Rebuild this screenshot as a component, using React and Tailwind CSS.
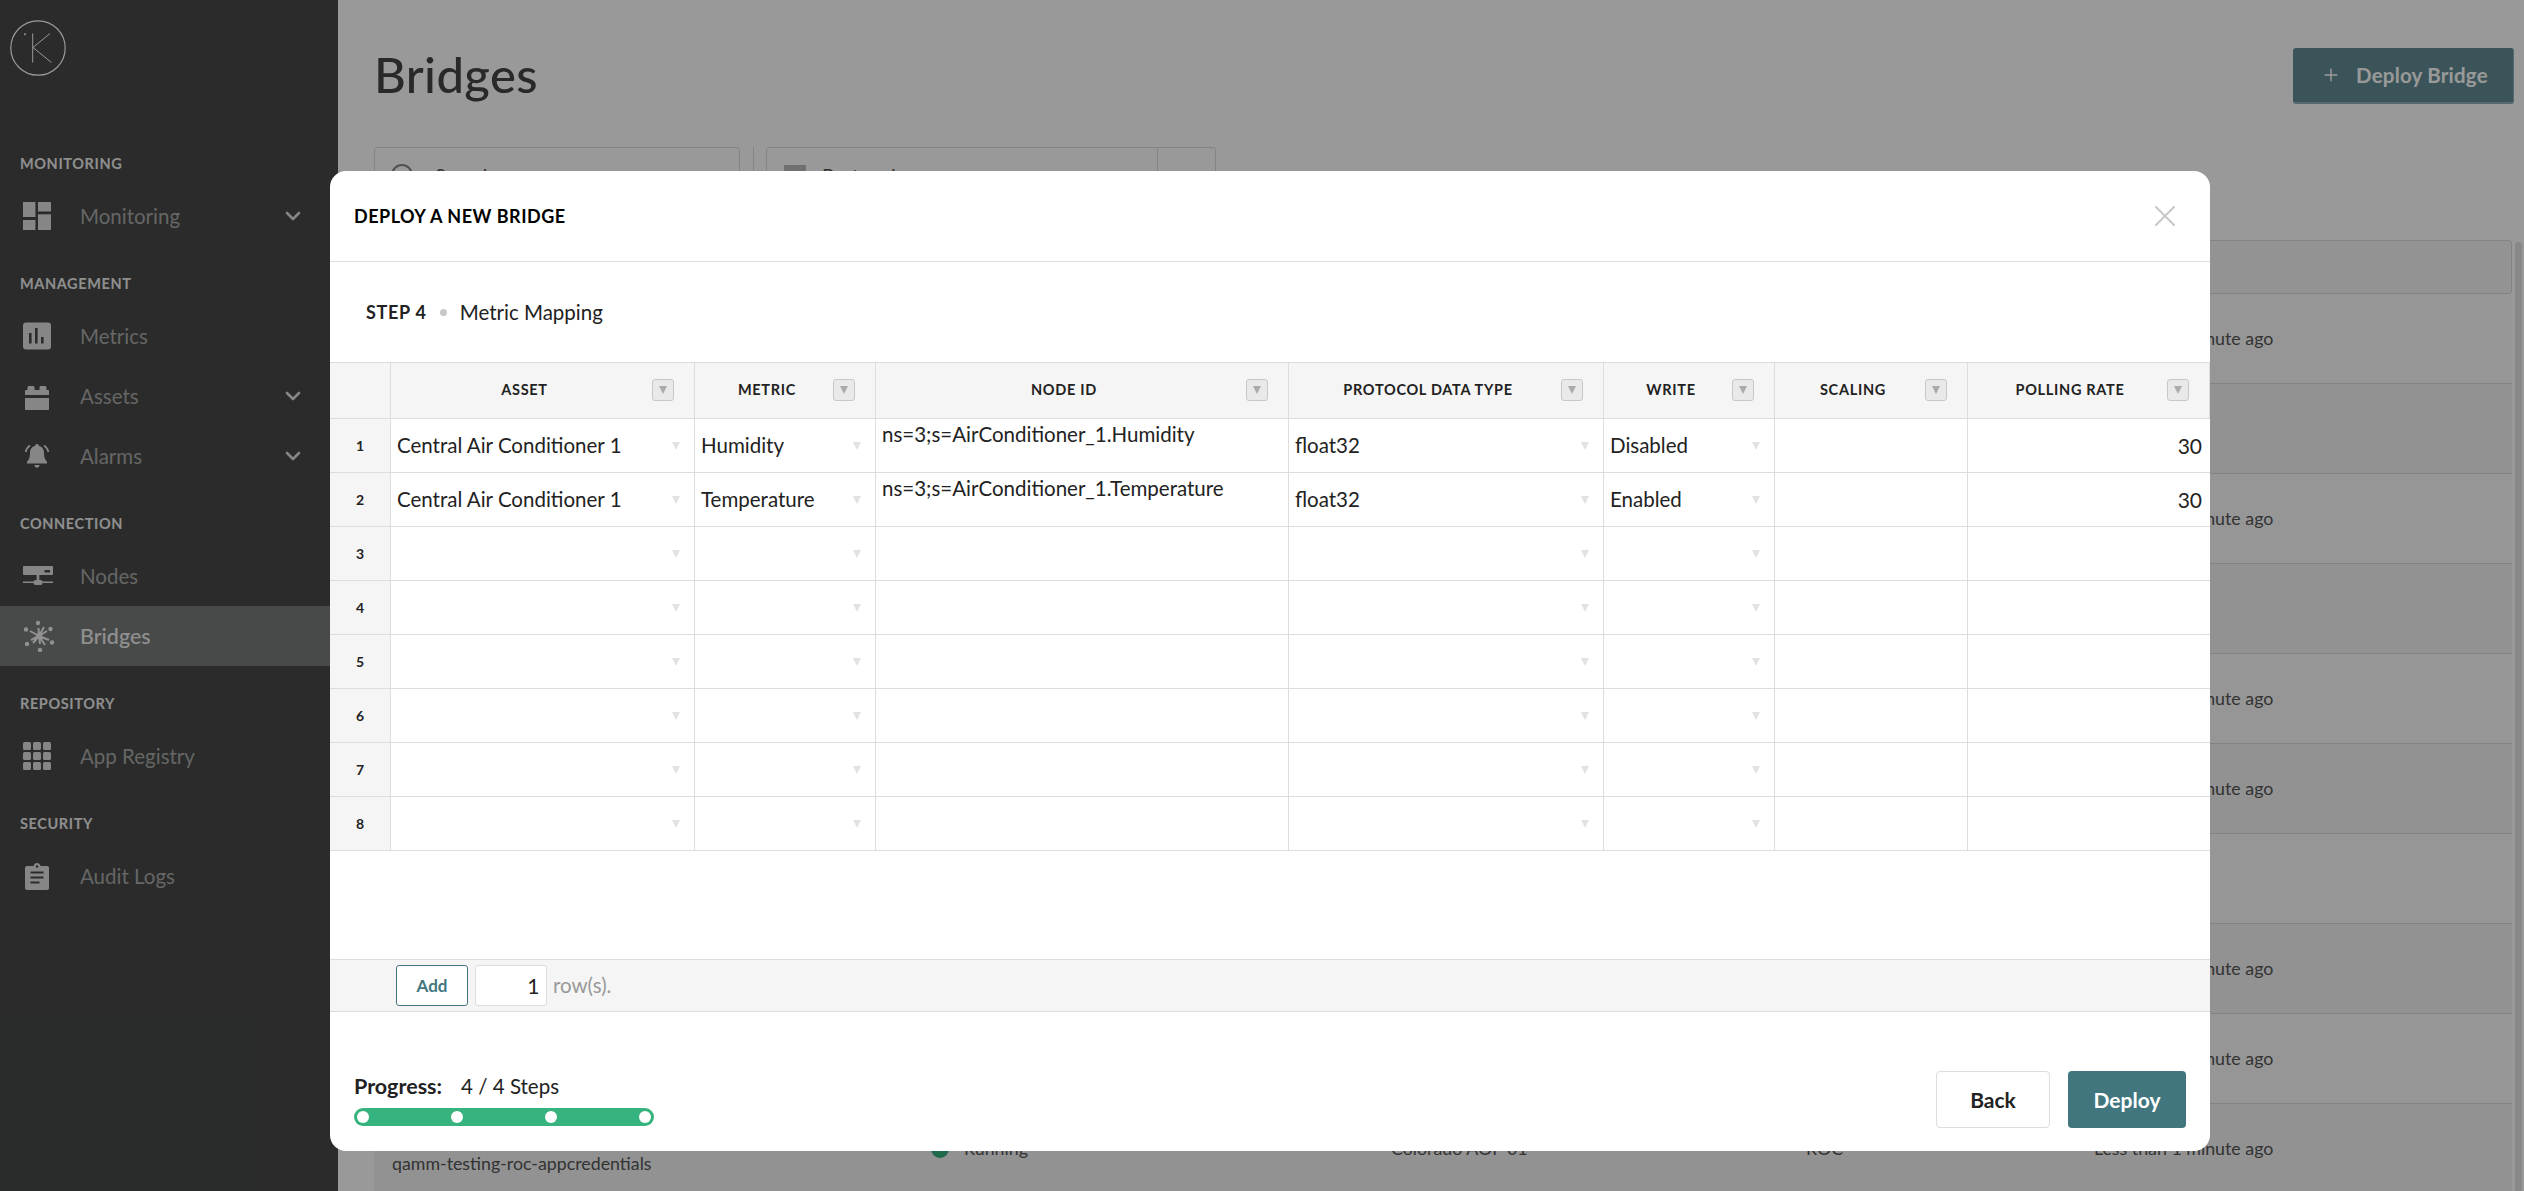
import React from 'react';
import { ChevronDown, Plus, X } from 'lucide-react';

const CELL_COLS = 'grid grid-cols-[61px_304px_181px_413px_315px_171px_193px_242px]';
const BG_COLS = 'grid grid-cols-[557px_460px_415px_288px_418px]';

const Logo = () => (
  <svg width="58" height="58" viewBox="0 0 58 58" fill="none" stroke="#fff" strokeWidth="1">
    <circle cx="29" cy="29" r="27.2" strokeWidth="1.2" />
    <path d="M23.7 14.5V43.5M41 14.5L24 28.5L42.5 43.5" />
    <circle cx="16" cy="15.2" r="1" fill="#fff" stroke="none" />
  </svg>
);

const DashIcon = () => (
  <svg width="28" height="28" viewBox="0 0 28 28" fill="#e0e0e0">
    <rect x="0" y="0" width="12.4" height="15" />
    <rect x="15" y="0" width="13" height="9.5" />
    <rect x="0" y="18" width="12.4" height="10" />
    <rect x="15" y="12.3" width="13" height="15.7" />
  </svg>
);

const MetricsIcon = () => (
  <svg width="28" height="28" viewBox="0 0 28 28">
    <rect x="0" y="0.5" width="28" height="27" rx="3" fill="#e0e0e0" />
    <rect x="6" y="11" width="2.6" height="10.5" fill="#464947" />
    <rect x="12" y="6" width="2.6" height="15.5" fill="#464947" />
    <rect x="18" y="15" width="2.6" height="6.5" fill="#464947" />
  </svg>
);

const AssetsIcon = () => (
  <svg width="28" height="28" viewBox="0 0 28 28" fill="#e0e0e0">
    <path d="M2 9c0-.6.4-1 1-1h1.500V5.500C4.500 4.700 5.200 4 6 4h4c.8 0 1.500.7 1.500 1.500V8h5V5.500C16.500 4.700 17.200 4 18 4h4c.8 0 1.500.7 1.500 1.500V8H25c.6 0 1 .4 1 1v4H2z" />
    <path d="M2 16h24v11c0 .6-.4 1-1 1H3c-.6 0-1-.4-1-1z" />
  </svg>
);

const BellIcon = () => (
  <svg width="28" height="28" viewBox="0 0 28 28" fill="#e0e0e0">
    <path d="M14 2c-1 0-1.800.7-1.800 1.700-3.600.9-5.200 3.800-5.200 7.400 0 4.400-1 6.600-3 8.700v1.700h20v-1.700c-2-2.100-3-4.300-3-8.700 0-3.600-1.600-6.500-5.200-7.400C15.800 2.700 15 2 14 2z" />
    <path d="M11.500 23h5c0 1.500-1 2.800-2.500 2.800s-2.500-1.300-2.500-2.800z" />
    <path d="M7 3.500C4.700 5 3.200 7.300 2.600 10M21 3.500c2.300 1.500 3.800 3.800 4.400 6.500" fill="none" stroke="#e0e0e0" strokeWidth="1.700" />
  </svg>
);

const NodesIcon = () => (
  <svg width="30" height="20" viewBox="0 0 30 20" fill="#e0e0e0">
    <path fillRule="evenodd" d="M1 0h28c.6 0 1 .4 1 1v7c0 .6-.4 1-1 1H1c-.6 0-1-.4-1-1V1c0-.6.4-1 1-1zm20.500 4v2.500H27V4z" />
    <rect x="13.700" y="9" width="2.600" height="6" />
    <rect x="0" y="15.500" width="30" height="1.500" />
    <rect x="10.500" y="14" width="9" height="5" rx="2" />
  </svg>
);

const BridgeIcon = () => (
  <svg width="32" height="32" viewBox="0 0 32 32" fill="#f2f2f2" stroke="#f2f2f2">
    <path strokeWidth="2" d="M16 16L15.500 8M16 16L24 11M16 16L26 20M16 16L17 24M16 16L8 20M16 16L7 11M16 16L21 7M16 16L22 25M16 16L10 23" />
    <circle cx="16" cy="16" r="3" stroke="none" />
    <circle cx="15" cy="3" r="2.200" stroke="none" />
    <circle cx="27.500" cy="9" r="2.200" stroke="none" />
    <circle cx="29" cy="22.500" r="2.200" stroke="none" />
    <circle cx="17" cy="30" r="2.200" stroke="none" />
    <circle cx="4" cy="24" r="2.200" stroke="none" />
    <circle cx="3" cy="9.500" r="2.200" stroke="none" />
  </svg>
);

const GridIcon = () => (
  <svg width="28" height="28" viewBox="0 0 28 28" fill="#e0e0e0">
    {[0, 10, 20].map((y) =>
      [0, 10, 20].map((x) => <rect key={`${x}-${y}`} x={x} y={y} width="8" height="8" rx="1.500" />)
    )}
  </svg>
);

const ClipIcon = () => (
  <svg width="28" height="28" viewBox="0 0 28 28">
    <path fill="#e0e0e0" d="M4 4h6.500c.4-1.800 1.800-3 3.500-3s3.100 1.200 3.500 3H24c1.100 0 2 .9 2 2v20c0 1.100-.9 2-2 2H4c-1.100 0-2-.9-2-2V6c0-1.100.9-2 2-2z" />
    <circle cx="14" cy="4.500" r="1.200" fill="#464947" />
    <rect x="7.500" y="9.500" width="13" height="2" fill="#464947" />
    <rect x="7.500" y="14.500" width="13" height="2" fill="#464947" />
    <rect x="7.500" y="19.500" width="9" height="2" fill="#464947" />
  </svg>
);

const NAV = [
  { title: 'Monitoring', items: [{ label: 'Monitoring', Icon: DashIcon, more: true }] },
  {
    title: 'Management',
    items: [
      { label: 'Metrics', Icon: MetricsIcon },
      { label: 'Assets', Icon: AssetsIcon, more: true },
      { label: 'Alarms', Icon: BellIcon, more: true },
    ],
  },
  {
    title: 'Connection',
    items: [
      { label: 'Nodes', Icon: NodesIcon },
      { label: 'Bridges', Icon: BridgeIcon, active: true },
    ],
  },
  { title: 'Repository', items: [{ label: 'App Registry', Icon: GridIcon }] },
  { title: 'Security', items: [{ label: 'Audit Logs', Icon: ClipIcon }] },
];

const Sidebar = () => (
  <aside className="w-[338px] h-full shrink-0 bg-[#464947]">
    <div className="h-[126px] pl-[9px] pt-[19px]">
      <Logo />
    </div>
    {NAV.map((section) => (
      <div key={section.title}>
        <div className="h-[60px] flex items-end pb-[14px] pl-[20px] text-[14.500px] leading-4 font-bold tracking-[0.6px] uppercase text-[#eeeeee]">
          {section.title}
        </div>
        {section.items.map(({ label, Icon, more, active }) => (
          <div
            key={label}
            className={`h-[60px] flex items-center ${active ? 'bg-[#787b7a] text-[#f0f0f0] text-[21.500px] font-medium' : 'text-[#aaaaaa] text-[20.500px]'}`}
          >
            <div className="w-[80px] pl-[23px] shrink-0 flex">
              <Icon />
            </div>
            <span className="flex-1">{label}</span>
            {more && <ChevronDown size={24} strokeWidth={2.600} className="text-[#e0e0e0] mr-[33px]" />}
          </div>
        ))}
      </div>
    ))}
  </aside>
);

// rows of the page behind the dialog, only what still shows beside it is filled in
const BG_ROWS = [true, false, true, false, true, true, false, true, true, true];

const Background = () => (
  <main className="flex-1 min-w-0 pl-[36px] pt-[48px]">
    <div className="w-[2140px] h-[56px] flex items-center justify-between">
      <h1 className="text-[49px] pb-[3px] tracking-[0.4px] font-medium text-[#454545]">Bridges</h1>
      <button className="w-[221px] h-[56px] flex items-center pl-[28px] gap-[15px] bg-[#638c95] border-b-2 border-r border-[#8fb0b7] rounded-[3px] text-[20.500px] font-bold tracking-[0.2px] text-white">
        <Plus size={20} strokeWidth={1.800} />
        Deploy Bridge
      </button>
    </div>
    <div className="mt-[43px] h-[56px] flex items-stretch">
      <div className="w-[366px] border border-[#dddddd] rounded-[3px] flex items-center pl-[16px] gap-[22px] text-[20px] text-[#555555]">
        <span className="w-[22px] h-[22px] rounded-full border-2 border-[#888888]" />
        Search
      </div>
      <div className="w-px bg-[#dddddd] ml-[13px] mr-[12px]" />
      <div className="w-[450px] border border-[#dddddd] rounded-[3px] flex items-center text-[20px] text-[#555555]">
        <span className="w-[22px] h-[20px] bg-[#bbbbbb] ml-[17px] mr-[16px]" />
        <span className="flex-1">Protocol</span>
        <span className="w-[58px] h-full border-l border-[#dddddd]" />
      </div>
    </div>
    <div className="mt-[37px] w-[2138px] text-[17.800px] text-[#555555]">
      <div className="h-[54px] bg-[#f5f5f5] border border-[#dadada] rounded-[3px]" />
      {BG_ROWS.map((hasTime, i) => {
        const last = i === BG_ROWS.length - 1;
        return (
          <div
            key={i}
            className={`${BG_COLS} items-center h-[90px] border-b border-[#dadada] ${i % 2 === 0 ? 'bg-[#fbfbfb]' : 'bg-[#f3f3f3]'}`}
          >
            <div className="pl-[18px] leading-[28px]">
              {last && (
                <>
                  <div>qamm-testing-roc</div>
                  <div>qamm-testing-roc-appcredentials</div>
                </>
              )}
            </div>
            <div className="flex items-center gap-[15px]">
              {last && (
                <>
                  <span className="w-[18px] h-[18px] rounded-full bg-[#36b37e]" />
                  Running
                </>
              )}
            </div>
            <div>{last && 'Colorado AOP 01'}</div>
            <div>{last && 'ROC'}</div>
            <div>{hasTime && 'Less than 1 minute ago'}</div>
          </div>
        );
      })}
    </div>
  </main>
);

const Triangle = ({ className = 'w-[8px] h-[10px]', fill = '#e2e2e2' }) => (
  <svg className={className} viewBox="0 0 8 10" fill={fill}>
    <path d="M0 1h8L4 9z" />
  </svg>
);

const COLUMNS = [
  { label: 'Asset', pr: 'pr-[36px]' },
  { label: 'Metric', pr: 'pr-[36px]' },
  { label: 'Node ID', pr: 'pr-[36px]' },
  { label: 'Protocol Data Type', pr: 'pr-[36px]' },
  { label: 'Write', pr: 'pr-[36px]' },
  { label: 'Scaling', pr: 'pr-[36px]' },
  { label: 'Polling Rate', pr: 'pr-[37px]' },
];

const HeaderRow = () => (
  <div className={`${CELL_COLS} h-[57px] bg-[#f5f5f5] border-y border-[#dddddd]`}>
    <div className="border-r border-[#dddddd]" />
    {COLUMNS.map((col) => (
      <div key={col.label} className={`relative flex items-center justify-center pb-[2px] border-r border-[#dddddd] ${col.pr}`}>
        <span className="text-[14.500px] font-bold tracking-[0.7px] uppercase text-[#222222]">{col.label}</span>
        <span className="absolute right-[20px] top-[16px] w-[22px] h-[22px] flex items-center justify-center bg-[#e9e9e9] border border-[#c8c8c8] rounded-[3px]">
          <Triangle fill="#ababab" />
        </span>
      </div>
    ))}
  </div>
);

const SelectCell = ({ value }) => (
  <div className="flex items-center justify-between pl-[6px] pr-[14px] border-r border-[#dddddd]">
    <span>{value}</span>
    <Triangle />
  </div>
);

const ROWS = [
  { asset: 'Central Air Conditioner 1', metric: 'Humidity', node: 'ns=3;s=AirConditioner_1.Humidity', type: 'float32', write: 'Disabled', rate: '30' },
  { asset: 'Central Air Conditioner 1', metric: 'Temperature', node: 'ns=3;s=AirConditioner_1.Temperature', type: 'float32', write: 'Enabled', rate: '30' },
  {}, {}, {}, {}, {}, {},
];

const DataRow = ({ row, n }) => (
  <div className={`${CELL_COLS} h-[54px] border-b border-[#dddddd] text-[20.500px] text-[#222222]`}>
    <div className="flex items-center justify-center pb-[1px] bg-[#f5f5f5] border-r border-[#dddddd] text-[14px] font-bold">{n}</div>
    <SelectCell value={row.asset} />
    <SelectCell value={row.metric} />
    <div className="pl-[6px] pt-[2px] border-r border-[#dddddd] leading-[26px]">{row.node}</div>
    <SelectCell value={row.type} />
    <SelectCell value={row.write} />
    <div className="border-r border-[#dddddd]" />
    <div className="flex items-center justify-end pr-[8px] text-[21px]">{row.rate}</div>
  </div>
);

const Dialog = () => (
  <div className="absolute left-[330px] top-[171px] w-[1880px] h-[980px] flex flex-col bg-white rounded-[16px] overflow-hidden">
    <div className="h-[91px] shrink-0 flex items-center justify-between pl-[24px] pr-[27px] border-b border-[#dddddd]">
      <span className="text-[18px] font-bold tracking-[0.5px] uppercase text-black">Deploy a new bridge</span>
      <X size={36} strokeWidth={1.400} className="text-[#c8c8c8]" />
    </div>
    <div className="h-[100px] shrink-0 flex items-center pl-[36px] text-[20.500px] text-[#222222]">
      <span className="text-[18px] font-bold tracking-[0.7px] uppercase">Step 4</span>
      <span className="w-[7px] h-[7px] rounded-full bg-[#c8c8c8] ml-[13px] mr-[13px]" />
      <span>Metric Mapping</span>
    </div>
    <HeaderRow />
    {ROWS.map((row, i) => (
      <DataRow key={i} row={row} n={i + 1} />
    ))}
    <div className="flex-1" />
    <div className="h-[53px] shrink-0 flex items-center pl-[66px] gap-[6.500px] bg-[#f5f5f5] border-y border-[#dddddd]">
      <button className="w-[72px] h-[41px] bg-white border border-[#42767f] rounded-[3px] text-[17px] font-bold text-[#42767f]">Add</button>
      <div className="w-[72px] h-[41px] flex items-center justify-end pr-[6px] bg-white border border-[#dddddd] rounded-[3px] text-[21px] text-[#222222]">1</div>
      <span className="text-[20.500px] text-[#999999]">row(s).</span>
    </div>
    <div className="h-[139px] shrink-0 flex items-end justify-between pl-[24px] pr-[24px] pb-[23px]">
      <div className="pb-[2px]">
        <div className="flex items-center gap-[19px] text-[20.500px] text-[#222222]">
          <span className="text-[21.500px] font-bold">Progress:</span>
          <span>4 / 4 Steps</span>
        </div>
        <div className="w-[300px] h-[18px] mt-[6px] px-[3px] flex items-center justify-between rounded-full bg-[#36b37e]">
          <span className="w-[12px] h-[12px] rounded-full bg-white" />
          <span className="w-[12px] h-[12px] rounded-full bg-white" />
          <span className="w-[12px] h-[12px] rounded-full bg-white" />
          <span className="w-[12px] h-[12px] rounded-full bg-white" />
        </div>
      </div>
      <div className="flex gap-[18px]">
        <button className="w-[114px] h-[57px] bg-white border border-[#dddddd] rounded-[4px] text-[21px] font-bold text-[#222222]">Back</button>
        <button className="w-[118px] h-[57px] bg-[#42767f] rounded-[4px] text-[21px] font-bold text-white">Deploy</button>
      </div>
    </div>
  </div>
);

export default function App() {
  return (
    <div className="relative w-[2524px] h-[1191px] flex overflow-hidden bg-white font-['Lato',sans-serif]">
      <Sidebar />
      <Background />
      <div className="absolute right-[2px] top-[242px] bottom-0 w-[7px] rounded-t-full bg-[#e3e3e3]" />
      <div className="absolute inset-0 bg-black/40" />
      <Dialog />
    </div>
  );
}
